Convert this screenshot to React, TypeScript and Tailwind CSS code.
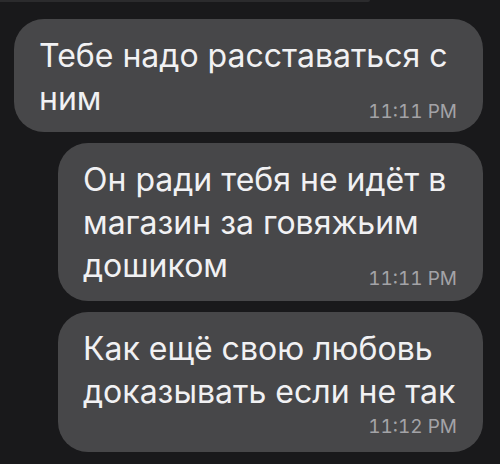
import React from "react";

const textFont = { fontFamily: "Inter, 'Noto Sans', sans-serif" };

// Одно сообщение: строки текста, время в правом нижнем углу.
function Bubble({
  lines,
  time,
  timeInline,
  className,
}: {
  lines: string[];
  time: string;
  timeInline: boolean;
  className: string;
}) {
  const body = timeInline ? lines.slice(0, -1) : lines;
  const last = lines[lines.length - 1];
  return (
    <div
      className={`${className} rounded-[30px] bg-[#474749] pt-[15px] pl-[25px] pr-[26px] text-[32px] leading-[43px] text-[#f1f1f3]`}
    >
      {body.map((l) => (
        <div key={l} className="whitespace-nowrap">
          {l}
        </div>
      ))}
      {timeInline ? (
        <div className="flex items-end justify-between">
          <span className="whitespace-nowrap">{last}</span>
          <span className="mb-[-3px] text-[19px] leading-[22px] tabular-nums text-[#a3a3a7]">
            {time}
          </span>
        </div>
      ) : (
        <div className="mt-[3px] flex justify-end text-[19px] leading-[22px] tabular-nums text-[#a3a3a7]">
          {time}
        </div>
      )}
    </div>
  );
}

export default function App() {
  return (
    <div
      className="flex h-[464px] w-[500px] flex-col items-end gap-[11px] overflow-hidden bg-[#19191b] pr-[17px]"
      style={textFont}
    >
      {/* край предыдущего сообщения */}
      <div className="mb-[6px] h-[2px] w-[370px] self-start rounded-br-[4px] bg-[#2b2b2d]" />
      <Bubble
        className="w-[469px] pb-[12px]"
        lines={["Тебе надо расставаться с", "ним"]}
        time="11:11 PM"
        timeInline
      />
      <Bubble
        className="w-[425px] pb-[14px]"
        lines={["Он ради тебя не идёт в", "магазин за говяжьим", "дошиком"]}
        time="11:11 PM"
        timeInline
      />
      <Bubble
        className="w-[425px] pb-[14px]"
        lines={["Как ещё свою любовь", "доказывать если не так"]}
        time="11:12 PM"
        timeInline={false}
      />
    </div>
  );
}
